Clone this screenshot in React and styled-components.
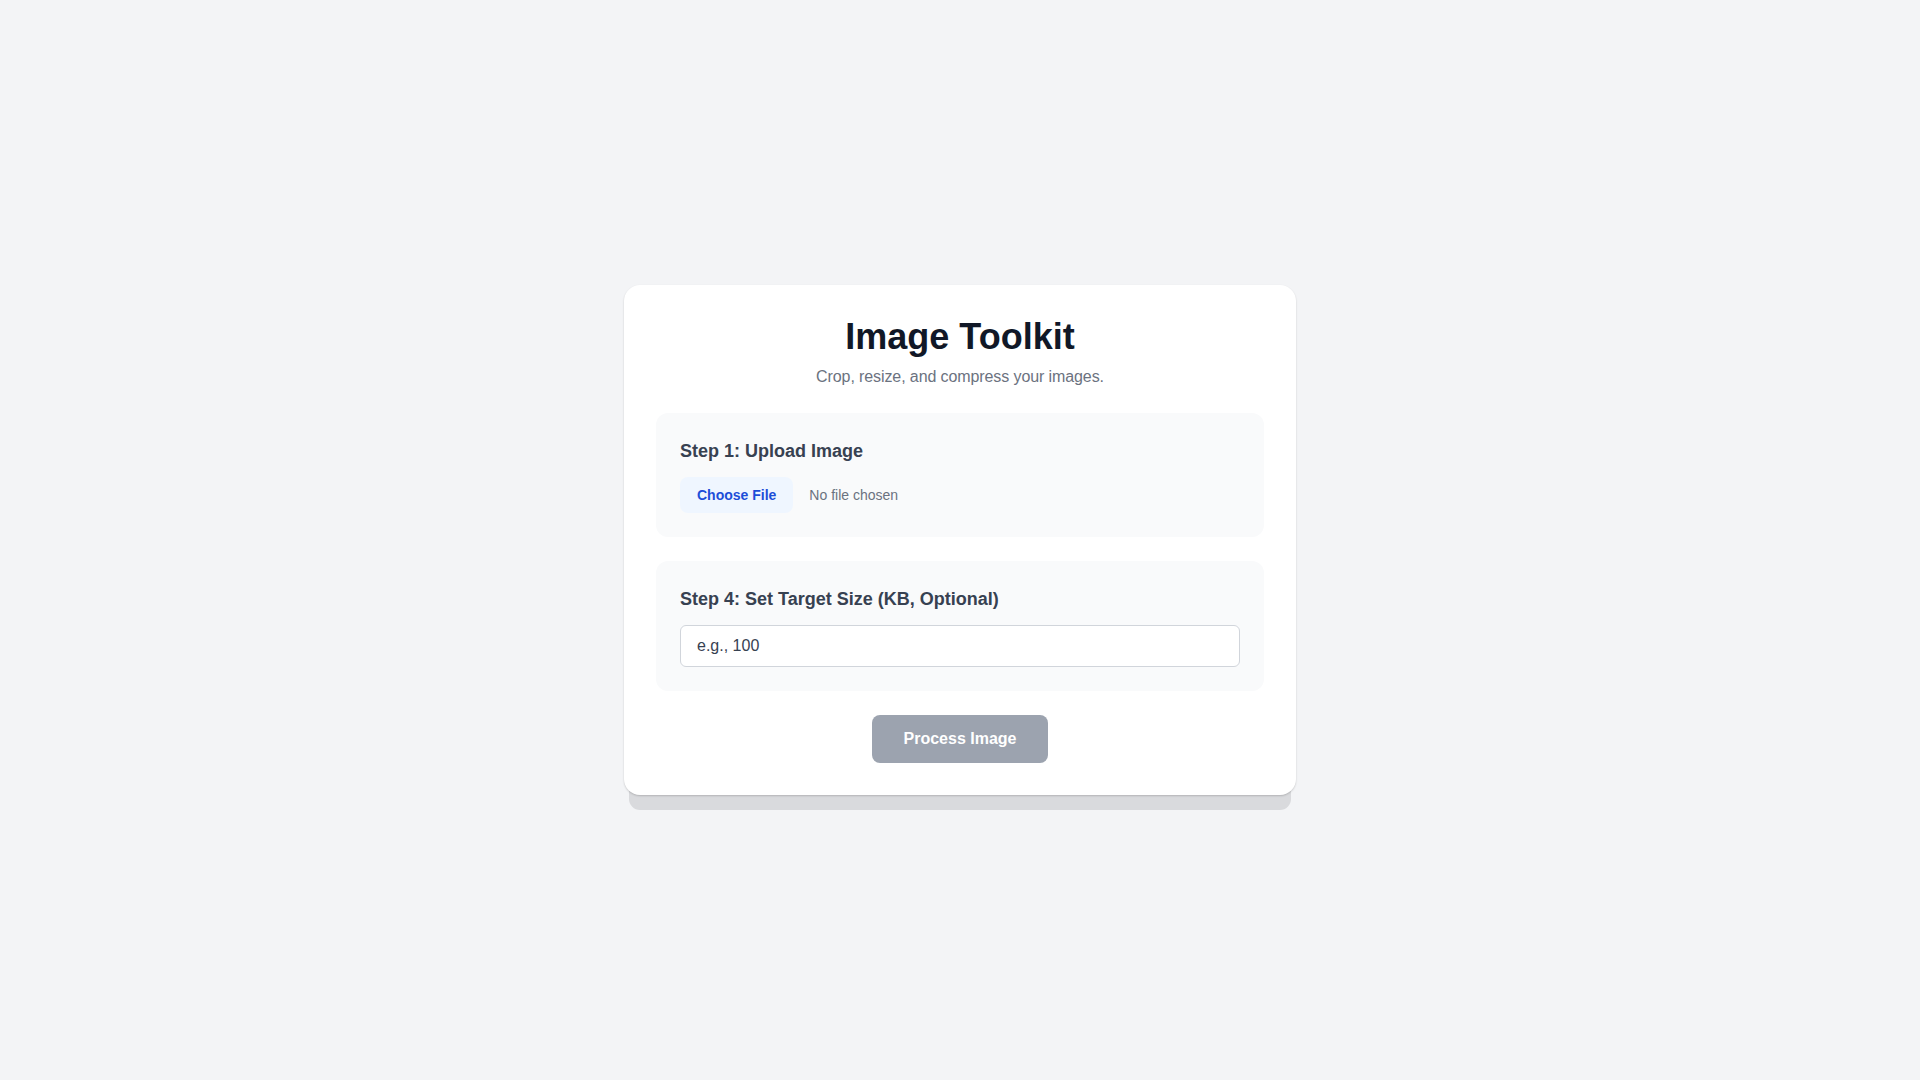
import React, { useState } from 'react';
import styled, { createGlobalStyle } from 'styled-components';

function App() {
	const [fileName, setFileName] = useState('');
	const [target, setTarget] = useState('');

	return (
		<>
			<GlobalStyle />
			<Page>
				<Card>
					<Header>
						<Title>Image Toolkit</Title>
						<Subtitle>Crop, resize, and compress your images.</Subtitle>
					</Header>

					<Section>
						<StepTitle>Step 1: Upload Image</StepTitle>
						<FileRow>
							<HiddenInput type="file" accept="image/*" onChange={e => setFileName(e.target.files[0] ? e.target.files[0].name : '')} />
							<FileButton>Choose File</FileButton>
							<FileName>{fileName || 'No file chosen'}</FileName>
						</FileRow>
					</Section>

					<Section>
						<StepTitle>Step 4: Set Target Size (KB, Optional)</StepTitle>
						<SizeInput type="number" placeholder="e.g., 100" value={target} onChange={e => setTarget(e.target.value)} />
					</Section>

					<Actions>
						<ProcessButton disabled={!fileName}>Process Image</ProcessButton>
					</Actions>
				</Card>
			</Page>
		</>
	);
}

export default App;


const GlobalStyle = createGlobalStyle`
	* {
		box-sizing: border-box;
	}
	body {
		margin: 0;
		background: #f3f4f6;
		font-family: "Liberation Sans", Arial, sans-serif;
		color: #111827;
	}
`;
const Page = styled.div`
	min-height: 100vh;
	display: flex;
	align-items: center;
	justify-content: center;
`;
const Card = styled.div`
	width: 672px;
	background: #ffffff;
	border-radius: 16px;
	padding: 32px;
	box-shadow: 0 1px 2px rgba(0, 0, 0, 0.18), 0 20px 0 -5px #d9dadd;
`;
const Header = styled.div`
	text-align: center;
	margin-bottom: 24px;
`;
const Title = styled.h1`
	margin: 0 0 8px;
	font-size: 36px;
	line-height: 40px;
	font-weight: 700;
	color: #111827;
`;
const Subtitle = styled.p`
	margin: 0;
	font-size: 16px;
	line-height: 24px;
	letter-spacing: -0.1px;
	color: #6b7280;
`;
const Section = styled.div`
	background: #f9fafb;
	border-radius: 12px;
	padding: 24px;
	margin-bottom: 24px;
`;
const StepTitle = styled.h2`
	margin: 0 0 12px;
	font-size: 18px;
	line-height: 28px;
	font-weight: 700;
	color: #374151;
`;
const FileRow = styled.label`
	display: flex;
	align-items: center;
	gap: 16px;
	cursor: pointer;
`;
const HiddenInput = styled.input`
	display: none;
`;
const FileButton = styled.span`
	padding: 8px 17px;
	border-radius: 8px;
	background: #eff6ff;
	color: #1d4ed8;
	font-size: 14px;
	line-height: 20px;
	font-weight: 700;
`;
const FileName = styled.span`
	font-size: 14px;
	line-height: 20px;
	color: #6b7280;
`;
const SizeInput = styled.input`
	display: block;
	width: 100%;
	height: 42px;
	padding: 8px 16px;
	border: 1px solid #d1d5db;
	border-radius: 6px;
	background: #ffffff;
	font-family: inherit;
	font-size: 16px;
	color: #111827;
	outline: none;
	&::placeholder {
		color: #374151;
		opacity: 1;
	}
	&::-webkit-inner-spin-button,
	&::-webkit-outer-spin-button {
		-webkit-appearance: none;
		margin: 0;
	}
`;
const Actions = styled.div`
	display: flex;
	justify-content: center;
`;
const ProcessButton = styled.button`
	padding: 12px 32px;
	border: none;
	border-radius: 8px;
	background: #9ca3af;
	color: #ffffff;
	font-family: inherit;
	font-size: 16px;
	line-height: 24px;
	font-weight: 700;
	cursor: pointer;
	&:disabled {
		cursor: not-allowed;
	}
`;
